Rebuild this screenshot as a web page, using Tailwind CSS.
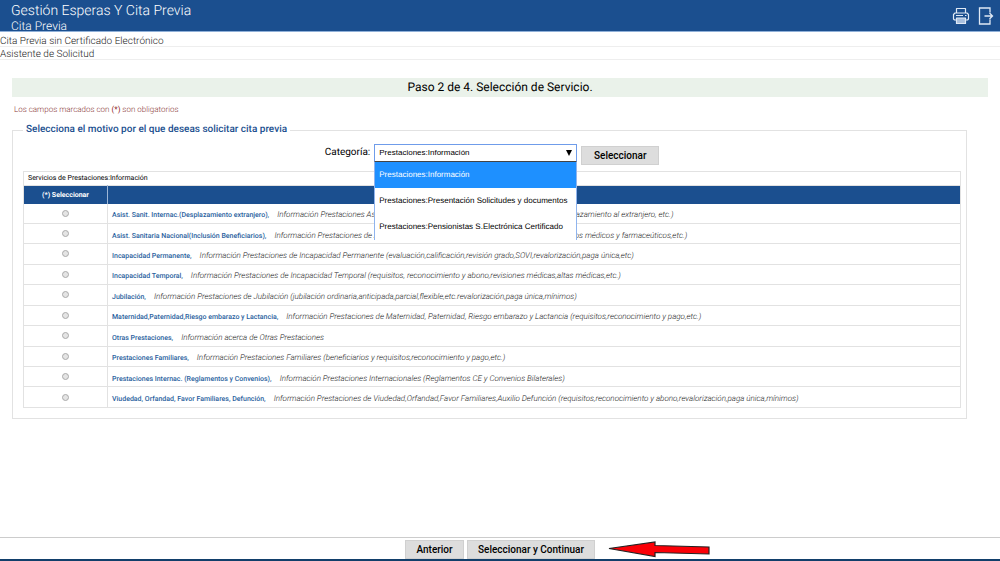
<!DOCTYPE html>
<html lang="es">
<head>
<meta charset="utf-8">
<meta name="viewport" content="width=device-width, initial-scale=1">
<title>Gestión Esperas Y Cita Previa</title>
<script src="https://cdn.jsdelivr.net/npm/@tailwindcss/browser@4"></script>
</head>
<body class="flex min-h-screen flex-col bg-white font-['Roboto',sans-serif] text-black [text-rendering:geometricPrecision]">
<header class="flex h-8 items-center justify-between border-b border-[#8fb0d8] bg-[#1b4f8f] pr-[6px] pl-[11px] text-white">
  <div>
    <h1 class="pt-[3px] text-[14px] leading-[17px] font-light">Gestión Esperas Y Cita Previa</h1>
    <p class="text-[12px] leading-[12px] font-light">Cita Previa</p>
  </div>
  <div class="flex items-center gap-2">
    <button type="button" aria-label="Imprimir">
      <svg class="block h-[18px] w-[18px]" viewBox="0 0 18 18" fill="none" stroke="#dfe9f5" stroke-width="1.200" stroke-linejoin="round"><path d="M4.500 6V1.500h9V6M4.500 13H2.500L1.500 12V7.500L3 6h12l1.500 1.500V12l-1 1h-2"/><path d="M4.500 11h9v5.500h-9z" fill="#a9c0de"/><path d="M4 8.500h7M13 8.500h1.500"/></svg>
    </button>
    <button type="button" aria-label="Salir">
      <svg class="block h-[18px] w-4" viewBox="0 0 16 18" fill="none" stroke="#dfe9f5" stroke-width="1.300"><path d="M12 5.500V1H1.500v16H12v-4.500M6.500 9H14.500M11.500 6l3 3-3 3"/></svg>
    </button>
  </div>
</header>

<div class="pt-[2px] text-[10px] font-light text-[#222]">
  <p class="h-[13px] border-b border-[#eee] leading-[15px]">Cita Previa sin Certificado Electrónico</p>
  <p class="h-[13px] border-b border-[#eee] leading-[15px]">Asistente de Solicitud</p>
</div>

<main class="pt-[18px]">
  <h2 class="mx-3 bg-[#eaf2ea] text-center text-[12px] leading-[19px]">Paso 2 de 4. Selección de Servicio.</h2>
  <p class="mt-2 ml-[14px] text-[8px] leading-[10px] font-light text-[#8b3a3a]">Los campos marcados con <b class="text-[#8b1a1a]">(*)</b> son obligatorios</p>

  <form>
  <fieldset class="mt-2 mr-[33px] ml-3 border border-[#e2e2e2] px-[10px] pb-[10px]">
    <legend class="px-[3px] text-[10px] leading-[14px] font-medium text-[#1b4f8f]">Selecciona el motivo por el que deseas solicitar cita previa</legend>
    <div class="flex items-center justify-center pt-[3px] pl-[5px]">
      <label for="categoria" class="mr-1 text-[10px]">Categoría:</label>
      <div class="relative">
        <select id="categoria" class="block h-[18px] w-[203px] appearance-none border border-[#6f9cea] bg-white px-1 font-['Liberation_Sans',sans-serif] text-[8px]">
          <option>Prestaciones:Información</option>
          <option>Prestaciones:Presentación Solicitudes y documentos</option>
          <option>Prestaciones:Pensionistas S.Electrónica Certificado</option>
        </select>
        <svg class="pointer-events-none absolute top-[6px] right-[5px] h-[6px] w-[6px]" viewBox="0 0 6 6"><path d="M0 0h6L3 6z"/></svg>
        <ul class="absolute top-[17px] left-0 z-10 w-[203px] border-x border-t border-x-[#8fb4ee] border-t-[#444] bg-white font-['Liberation_Sans',sans-serif] text-[8px] leading-[26px]" role="listbox" aria-label="Categoría">
          <li role="option" aria-selected="true" class="bg-[#1e90ff] px-1 text-white">Prestaciones:Información</li>
          <li role="option" aria-selected="false" class="px-1">Prestaciones:Presentación Solicitudes y documentos</li>
          <li role="option" aria-selected="false" class="px-1">Prestaciones:Pensionistas S.Electrónica Certificado</li>
        </ul>
      </div>
      <button type="button" class="mt-[6px] ml-1 h-[19px] w-[78px] border border-[#d0d0d0] bg-[#ddd] text-[10px] leading-[17px] font-medium">Seleccionar</button>
    </div>

    <div class="mr-[-5px] mt-[6px]">
    <table class="h-[223px] w-full border-collapse border border-[#e2e2e2] text-[8px] leading-[10px]">
      <caption class="h-[14px] border border-b-0 border-[#e2e2e2] pl-1 text-left text-[7px] leading-[13px]">Servicios de Prestaciones:Información</caption>
      <thead>
        <tr class="h-[18px] bg-[#1b4f8f] text-white">
          <th scope="col" class="w-[84px] border-r border-[#9db6d6] p-0 text-[7px] font-bold">(*) Seleccionar</th>
          <th scope="col" class="p-0"><span class="sr-only">Servicio</span></th>
        </tr>
      </thead>
      <tbody id="servicios"></tbody>
    </table>
    </div>
  </fieldset>
  </form>
</main>

<footer class="mt-auto border-t border-b-2 border-t-[#ccc] border-b-[#123f6b] pt-[2px]">
  <div class="relative flex justify-center gap-[3px]">
    <button type="button" class="h-[19px] w-[59px] border border-[#d0d0d0] bg-[#ddd] text-[10px] leading-[17px] font-medium">Anterior</button>
    <button type="button" class="h-[19px] w-32 border border-[#d0d0d0] bg-[#ddd] text-[10px] leading-[17px] font-medium">Seleccionar y Continuar</button>
    <svg class="absolute top-0 left-1/2 ml-[107px] h-[18px] w-[106px]" viewBox="0 0 106 18"><path d="M2 8.500L48 2v3.500L102 7v7L48 12.500V16.500z" fill="#fb0007" stroke="#222" stroke-width="1.200"/></svg>
  </div>
</footer>

<script>
const servicios = [
  ["Asist. Sanit. Internac.(Desplazamiento extranjero),", "Información Prestaciones Asistencia Sanitaria Internacional (derecho a asistencia, desplazamiento al extranjero, etc.)"],
  ["Asist. Sanitaria Nacional(Inclusión Beneficiarios),", "Información Prestaciones de Asistencia Sanitaria (inclusión de sus beneficiarios y servicios médicos y farmaceúticos,etc.)"],
  ["Incapacidad Permanente,", "Información Prestaciones de Incapacidad Permanente (evaluación,calificación,revisión grado,SOVI,revalorización,paga única,etc)"],
  ["Incapacidad Temporal,", "Información Prestaciones de Incapacidad Temporal (requisitos, reconocimiento y abono,revisiones médicas,altas médicas,etc.)"],
  ["Jubilación,", "Información Prestaciones de Jubilación (jubilación ordinaria,anticipada,parcial,flexible,etc.revalorización,paga única,mínimos)"],
  ["Maternidad,Paternidad,Riesgo embarazo y Lactancia,", "Información Prestaciones de Maternidad, Paternidad, Riesgo embarazo y Lactancia (requisitos,reconocimiento y pago,etc.)"],
  ["Otras Prestaciones,", "Información acerca de Otras Prestaciones"],
  ["Prestaciones Familiares,", "Información Prestaciones Familiares (beneficiarios y requisitos,reconocimiento y pago,etc.)"],
  ["Prestaciones Internac. (Reglamentos y Convenios),", "Información Prestaciones Internacionales (Reglamentos CE y Convenios Bilaterales)"],
  ["Viudedad, Orfandad, Favor Familiares, Defunción,", "Información Prestaciones de Viudedad,Orfandad,Favor Familiares,Auxilio Defunción (requisitos,reconocimiento y abono,revalorización,paga única,mínimos)"]
];
document.getElementById("servicios").innerHTML = servicios.map(([nombre, info], i) => `
  <tr class="border-b border-[#e2e2e2]">
    <td class="border-r border-[#e2e2e2] p-0"><input type="radio" name="servicio" id="s${i}" class="mx-auto block h-[7px] w-[7px] appearance-none rounded-full border border-[#aaa] bg-[#e4e4e4]"></td>
    <td class="p-0 pt-1 pl-1 whitespace-nowrap"><label for="s${i}" class="block"><span class="mr-2 text-[7px] font-medium text-[#2a5f9e]">${nombre}</span><i class="font-light text-[#222]">${info}</i></label></td>
  </tr>`).join("");
</script>
</body>
</html>
